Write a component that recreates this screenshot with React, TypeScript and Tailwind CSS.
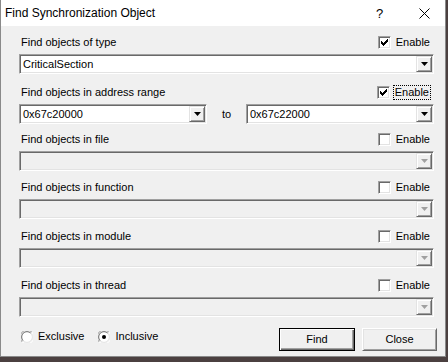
import React from 'react'

const ui = "font-['Liberation_Sans',Arial,sans-serif] text-[11px] leading-[13px] text-black"

const Arrow = ({ disabled }: { disabled?: boolean }) => (
  <svg width="7" height="4" viewBox="0 0 7 4">
    <polygon points="0,0 7,0 3.5,4" fill={disabled ? '#a0a0a0' : '#000'} />
  </svg>
)

const Combo = ({ value, disabled, w }: { value?: string; disabled?: boolean; w: string }) => (
  <div
    className={`${w} h-[20px] flex border border-t-[#a0a0a0] border-l-[#a0a0a0] border-b-white border-r-white shadow-[inset_1px_1px_0_#696969,inset_-1px_-1px_0_#e3e3e3] p-[1px] ${
      disabled ? 'bg-[#f0f0f0]' : 'bg-white'
    }`}
  >
    <div className="flex-1 flex items-center pl-[2px] overflow-hidden whitespace-nowrap">{value}</div>
    <div className="w-[16px] h-[16px] flex items-center justify-center bg-[#f0f0f0] border border-t-[#e3e3e3] border-l-[#e3e3e3] border-b-[#696969] border-r-[#696969] shadow-[inset_1px_1px_0_#fff,inset_-1px_-1px_0_#a0a0a0]">
      <Arrow disabled={disabled} />
    </div>
  </div>
)

const Check = ({ on, focus }: { on?: boolean; focus?: boolean }) => (
  <div className="flex items-center gap-[5px]">
    <div className="w-[13px] h-[13px] bg-white border border-t-[#a0a0a0] border-l-[#a0a0a0] border-b-white border-r-white shadow-[inset_1px_1px_0_#696969,inset_-1px_-1px_0_#e3e3e3] flex items-center justify-center">
      {on && (
        <svg width="7" height="7" viewBox="0 0 7 7">
          <path d="M0 2h1v1h1v1h1v-1h1v-1h1v-1h1v-1h1v3h-1v1h-1v1h-1v1h-1v1h-1v-1h-1v-1h-1v-1h-1z" fill="#000" />
        </svg>
      )}
    </div>
    <span className={focus ? 'outline outline-1 outline-dotted outline-black px-[1px] -ml-[1px]' : ''}>Enable</span>
  </div>
)

const Radio = ({ on, label }: { on?: boolean; label: string }) => (
  <div className="flex items-center gap-[5px]">
    <svg width="12" height="12" viewBox="0 0 12 12">
      <circle cx="6" cy="6" r="5.5" fill="#fff" />
      <path d="M1.1 10.9 A5.5 5.5 0 0 1 10.9 1.1" fill="none" stroke="#a0a0a0" />
      <path d="M2.2 9.8 A4.5 4.5 0 0 1 9.8 2.2" fill="none" stroke="#696969" />
      <path d="M10.9 1.1 A5.5 5.5 0 0 1 1.1 10.9" fill="none" stroke="#fff" />
      <path d="M9.8 2.2 A4.5 4.5 0 0 1 2.2 9.8" fill="none" stroke="#e3e3e3" />
      {on && <circle cx="6" cy="6" r="2" fill="#000" />}
    </svg>
    <span>{label}</span>
  </div>
)

const Section = ({ label, children, mt, on, focus }: { label: string; children: React.ReactNode; mt: string; on?: boolean; focus?: boolean }) => (
  <div className={mt}>
    <div className="flex items-center justify-between h-[13px] pr-[15px]">
      <span className="pl-[2px]">{label}</span>
      <Check on={on} focus={focus} />
    </div>
    <div className="mt-[5px]">{children}</div>
  </div>
)

const App = () => {
  return (
    <div className="w-[448px] h-[362px] bg-[#4b4040] overflow-hidden">
      <div className={`w-[446px] h-[357px] bg-[#f0f0f0] border-l border-r border-b border-[#8a8a8a] flex flex-col ${ui}`}>
        <div className="h-[26px] bg-white flex items-center pl-[4px] font-['Liberation_Sans',Arial,sans-serif] text-[12px]">
          <span className="flex-1">Find Synchronization Object</span>
          <span className="w-[12px] text-[13px] mr-[31px]">?</span>
          <svg width="11" height="11" viewBox="0 0 11 11" className="mr-[15px]">
            <path d="M0.5 0.5L10.5 10.5M10.5 0.5L0.5 10.5" stroke="#000" strokeWidth="1" />
          </svg>
        </div>
        <div className="flex flex-col pl-[18px] pt-[10px]">
          <Section label="Find objects of type" mt="mt-0" on>
            <Combo value="CriticalSection" w="w-[415px]" />
          </Section>
          <Section label="Find objects in address range" mt="mt-[12px]" on focus>
            <div className="flex items-center">
              <Combo value="0x67c20000" w="w-[188px]" />
              <span className="w-[39px] text-center">to</span>
              <Combo value="0x67c22000" w="w-[188px]" />
            </div>
          </Section>
          <Section label="Find objects in file" mt="mt-[9px]">
            <Combo disabled w="w-[415px]" />
          </Section>
          <Section label="Find objects in function" mt="mt-[10px]">
            <Combo disabled w="w-[415px]" />
          </Section>
          <Section label="Find objects in module" mt="mt-[11px]">
            <Combo disabled w="w-[415px]" />
          </Section>
          <Section label="Find objects in thread" mt="mt-[11px]">
            <Combo disabled w="w-[415px]" />
          </Section>
          <div className="flex items-start mt-[11px] pr-[8px]">
            <div className="flex items-center gap-[14px] pl-[2px] pt-[2px] flex-1">
              <Radio label="Exclusive" />
              <Radio on label="Inclusive" />
            </div>
            <button className="w-[76px] h-[23px] border border-black bg-[#f0f0f0] shadow-[inset_1px_1px_0_#fff,inset_-1px_-1px_0_#696969,inset_-2px_-2px_0_#a0a0a0]">
              Find
            </button>
            <button className="ml-[7px] w-[75px] h-[23px] bg-[#f0f0f0] border border-t-white border-l-white border-b-[#696969] border-r-[#696969] shadow-[inset_1px_1px_0_#e3e3e3,inset_-1px_-1px_0_#a0a0a0]">
              Close
            </button>
          </div>
        </div>
      </div>
    </div>
  )
}

export default App
